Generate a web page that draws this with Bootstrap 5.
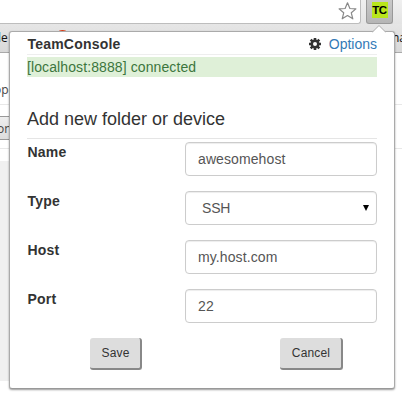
<!DOCTYPE html>
<html lang="en">
<head>
<meta charset="utf-8">
<title>TeamConsole</title>
<link rel="stylesheet" href="https://cdn.jsdelivr.net/npm/bootstrap@5.3.0/dist/css/bootstrap.min.css">
<style>
body{width:402px;height:402px;overflow:hidden;background:#fff;color:#333;font:14px/20px "Liberation Sans",Arial,sans-serif}
.toolbar{height:24px;background:linear-gradient(#f0f0f0,#e4e4e4)}
.omnibox{width:361px;background:#fff;border:solid #bdbdbd;border-width:0 1px 1px 0;border-radius:0 0 3px 0;padding:2px 3px 0 0}
.ext{width:27px;height:24px;margin-left:5px;background:linear-gradient(#c9c9c9,#b5b5b5);border:1px solid #999;border-top:0;border-radius:0 0 3px 3px;padding-top:2px}
.ext-logo{width:16px;height:16px;background:#b9e61c;color:#000;font:bold 11.5px/17px "Liberation Sans",sans-serif;letter-spacing:-.4px;text-align:center}
.bookmarks{height:29px;background:linear-gradient(#e6e6e6,#d9d9d9);border-bottom:1px solid #aaa;font:12px/28px "Open Sans",sans-serif;color:#111}
.mark-left{margin-left:-2px}
.mark-right{margin-right:-4px}
.strip{height:27px;margin-top:25px;border-bottom:1px solid #e8e8e8;font:12px/24px "Open Sans",sans-serif;color:#444;text-indent:-6px}
.strip-btn{width:20px;height:24px;background:linear-gradient(#eee,#ddd);border:1px solid #999;border-left:0;font:12px/23px "Open Sans",sans-serif;color:#444;text-indent:-3px}
.strip-line{height:44px;padding-top:11px;border-bottom:1px solid #e8e8e8;margin-bottom:12px}
.side{height:220px;background:#f0f0f0;width:30px}
.red-dot{left:55px;top:30px;width:15px;height:15px;background:#dc3a12}
.brown-dot{left:307px;top:31px;width:7px;height:5px;background:#6b3d22}
.popup{left:9px;top:31px;width:386px;height:358px;background:#fff;border:1px solid #aaa;border-bottom-color:#999;border-radius:3px;box-shadow:0 1px 2px rgba(0,0,0,.4);padding:2px 17px 0}
.pointer{left:362px;top:-7px;width:14px;height:8px}
.head{height:21px;border-bottom:1px solid #eee}
.bold-text{font-weight:700;letter-spacing:.2px;padding-left:.5px}
.opt{color:#337ab7}
.status{height:20px;margin-top:2px;background:#dff0d8;color:#3c763d;letter-spacing:.1px}
.title{font-size:18px;line-height:20px;height:30px;margin:32px 0 3px;border-bottom:1px solid #e5e5e5;font-weight:400}
.line{height:34px;margin-bottom:15px}
.field{width:192px;height:34px;font-size:14px;line-height:20px;padding:6px 12px;color:#555;letter-spacing:.1px;border:1px solid #ccc;border-radius:4px;box-shadow:inset 0 1px 1px rgba(0,0,0,.075)}
.pick{padding:6px 7px 6px 16px;letter-spacing:-.2px}
.act{height:32px;background:#ddd;border:solid #888;border-width:0 2px 2px 0;border-radius:3px;color:#333;font:12px/30px "Liberation Sans",sans-serif;letter-spacing:.15px;padding:0 0 0 1px}
.act-save{width:52px;margin-left:63px}
.act-cancel{width:63px;margin-right:34px}
</style>
<script src="https://cdn.jsdelivr.net/npm/bootstrap@5.3.0/dist/js/bootstrap.bundle.min.js"></script>
</head>
<body class="position-relative">
<div class="toolbar d-flex">
  <div class="omnibox d-flex justify-content-end"><svg width="19" height="18" viewBox="0 0 19 18"><path d="M9.500 .8l2.400 5.700 6 .4-4.600 3.900 1.500 6-5.300-3.300-5.300 3.300 1.500-6L1.100 6.900l6-.4z" fill="#fff" stroke="#888" stroke-width="1.200" stroke-linejoin="round"/></svg></div>
  <div class="ext d-flex justify-content-center"><div class="ext-logo">TC</div></div>
</div>
<div class="bookmarks d-flex justify-content-between"><span class="mark-left">le</span><span class="mark-right">ma</span></div>
<div class="strip">ope</div>
<div class="strip-line"><div class="strip-btn">on</div></div>
<div class="side"></div>
<div class="red-dot position-absolute rounded-circle"></div>
<div class="brown-dot position-absolute rounded-circle"></div>
<main class="popup position-absolute">
  <svg class="pointer position-absolute" viewBox="0 0 14 8"><path d="M0 7.500L7 .5l7 7" fill="#fff" stroke="#aaa"/><path d="M1 7.500h12" stroke="#fff"/></svg>
  <header class="head d-flex justify-content-between">
    <span class="bold-text">TeamConsole</span>
    <span class="d-flex align-items-center"><svg width="12" height="12" viewBox="0 0 12 12" class="me-2"><g stroke="#333" stroke-width="2.600"><path d="M6 0v12M0 6h12M1.700 1.700l8.600 8.600M10.300 1.700L1.700 10.300"/></g><circle cx="6" cy="6" r="4.500" fill="#333"/><circle cx="6" cy="6" r="2" fill="#fff"/></svg><a class="opt text-decoration-none" href="#">Options</a></span>
  </header>
  <div class="status">[localhost:8888] connected</div>
  <h1 class="title">Add new folder or device</h1>
  <form>
    <div class="line d-flex justify-content-between"><label class="bold-text" for="n">Name</label><input id="n" class="form-control field" value="awesomehost"></div>
    <div class="line d-flex justify-content-between"><span class="bold-text">Type</span><div class="field pick d-flex justify-content-between align-items-center"><span>SSH</span><svg width="6" height="6" viewBox="0 0 6 6"><path d="M0 0h6L3 6z" fill="#000"/></svg></div></div>
    <div class="line d-flex justify-content-between"><label class="bold-text" for="h">Host</label><input id="h" class="form-control field" value="my.host.com"></div>
    <div class="line d-flex justify-content-between"><label class="bold-text" for="p">Port</label><input id="p" class="form-control field" value="22"></div>
    <div class="d-flex justify-content-between"><button type="button" class="btn act act-save">Save</button><button type="button" class="btn act act-cancel">Cancel</button></div>
  </form>
</main>
</body>
</html>
